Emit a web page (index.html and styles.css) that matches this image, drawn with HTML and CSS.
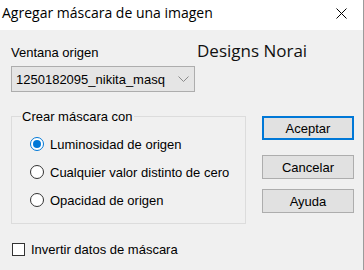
FILE: index.html
```html
<!DOCTYPE html>
<html lang="es">
<head>
    <meta charset="UTF-8">
    <title>Agregar máscara de una imagen</title>
    <link rel="stylesheet" href="styles.css">
</head>
<body>
<div class="window">
    <header class="titlebar">
        <span class="title">Agregar máscara de una imagen</span>
        <svg class="close" width="11" height="11" viewBox="0 0 11 11">
            <path d="M0.5 0.5L10.5 10.5M10.5 0.5L0.5 10.5" stroke="#000" stroke-width="1" fill="none"/>
        </svg>
    </header>

    <main class="dialog">
        <div class="top-row">
            <div class="source">
                <div class="label">Ventana origen</div>
                <div class="combo">
                    <span>1250182095_nikita_masq</span>
                    <svg width="11" height="6" viewBox="0 0 11 6">
                        <path d="M0.5 0.5L5.5 5.5L10.5 0.5" stroke="#8a8a8a" stroke-width="1" fill="none"/>
                    </svg>
                </div>
            </div>
            <div class="brand">Designs Norai</div>
        </div>

        <div class="middle">
            <fieldset class="group">
                <legend>Crear máscara con</legend>
                <div class="option"><span class="radio checked"></span>Luminosidad de origen</div>
                <div class="option"><span class="radio"></span>Cualquier valor distinto de cero</div>
                <div class="option"><span class="radio"></span>Opacidad de origen</div>
            </fieldset>

            <div class="buttons">
                <button class="btn default">Aceptar</button>
                <button class="btn cancel">Cancelar</button>
                <button class="btn help">Ayuda</button>
            </div>
        </div>

        <div class="check"><span class="box"></span>Invertir datos de máscara</div>
    </main>
</div>
</body>
</html>
```

FILE: styles.css
```css
:root {
    --dialog-bg: #f0f0f0;
    --title-bg: #ffffff;
    --text-color: #000000;
    --control-bg: #e1e1e1;
    --control-border: #adadad;
    --group-border: #dcdcdc;
    --accent: #0078d7;
}

body {
    margin: 0;
    background-color: var(--dialog-bg);
    color: var(--text-color);
    font-family: 'Liberation Sans', Arial, sans-serif;
    font-size: 13px;
}

.window {
    width: 363px;
    height: 270px;
    border-right: 1px solid #9b9b9b;
}

.titlebar {
    height: 30px;
    background-color: var(--title-bg);
    display: flex;
    align-items: flex-start;
    padding-left: 2px;
}

.title {
    font-family: 'Open Sans', sans-serif;
    font-size: 14px;
    line-height: 19px;
    margin-top: 3px;
}

.close {
    margin-left: auto;
    margin-top: 8px;
    margin-right: 16px;
}

.dialog {
    padding: 9px 0 0 11px;
}

.top-row {
    display: flex;
    align-items: flex-start;
}

.source {
    width: 184px;
    padding-top: 6px;
}

.label {
    line-height: 15px;
}

.combo {
    margin-top: 6px;
    height: 26px;
    box-sizing: border-box;
    border: 1px solid var(--control-border);
    background-color: #e5e5e5;
    display: flex;
    align-items: center;
    justify-content: space-between;
    padding: 0 5px 0 4px;
}

.brand {
    font-family: 'Open Sans', sans-serif;
    font-size: 17px;
    line-height: 23px;
    margin-left: 2px;
    color: #111;
}

.middle {
    display: flex;
    align-items: flex-start;
    margin-top: 17px;
}

.group {
    margin: 0;
    width: 235px;
    min-width: 0;
    box-sizing: border-box;
    padding: 6px 0 9px 0;
    border: 1px solid var(--group-border);
}

.group legend {
    margin-left: 9px;
    padding: 0 1px;
    line-height: 15px;
}

.option {
    display: flex;
    align-items: center;
    gap: 6px;
    height: 28px;
    margin-left: 18px;
}

.radio {
    width: 14px;
    height: 14px;
    box-sizing: border-box;
    border: 1px solid #333;
    border-radius: 50%;
    background-color: #fff;
    flex: none;
    display: flex;
    align-items: center;
    justify-content: center;
}

.radio.checked {
    border-color: var(--accent);
}

.radio.checked::after {
    content: '';
    width: 8px;
    height: 8px;
    border-radius: 50%;
    background-color: var(--accent);
}

.buttons {
    display: flex;
    flex-direction: column;
    margin-left: 16px;
    margin-top: 7px;
}

.btn {
    width: 92px;
    height: 24px;
    box-sizing: border-box;
    padding: 0;
    border: 1px solid var(--control-border);
    background-color: var(--control-bg);
    color: var(--text-color);
    font-family: inherit;
    font-size: 13px;
}

.btn.default {
    border: 2px solid var(--accent);
}

.btn.cancel {
    margin-top: 15px;
}

.btn.help {
    margin-top: 10px;
}

.check {
    display: flex;
    align-items: center;
    gap: 6px;
    line-height: 15px;
    margin-top: 18px;
    margin-left: 1px;
}

.check .box {
    width: 13px;
    height: 13px;
    box-sizing: border-box;
    border: 1px solid #333;
    background-color: #fff;
}
```
